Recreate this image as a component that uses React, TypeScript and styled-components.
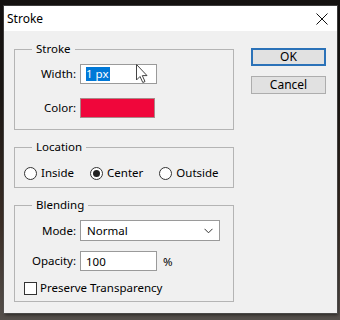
import React from 'react';
import styled, { createGlobalStyle } from 'styled-components';

const Global = createGlobalStyle`
  html, body { margin: 0; padding: 0; }
  body {
    width: 340px;
    height: 320px;
    overflow: hidden;
    background: linear-gradient(to bottom, #141110 0%, #1c1714 30%, #3b2e26 70%, #55504c 100%);
    font-family: "Noto Sans", "Liberation Sans", sans-serif;
    color: #000;
  }
`;

const Dialog = styled.div`
  margin: 6px 0 0 4px;
  width: 333px;
  height: 307px;
  background: #f0f0f0;
  display: flex;
  flex-direction: column;
  box-shadow: 0 0 0 1px rgba(90, 90, 90, 0.6), 1px 2px 3px rgba(0, 0, 0, 0.5);
`;

const TitleBar = styled.div`
  height: 25px;
  background: #fff;
  display: flex;
  align-items: center;
  justify-content: space-between;
  padding: 0 9px 0 3px;
  font-size: 12px;
`;

const Body = styled.div`
  flex: 1;
  display: flex;
  gap: 17px;
  padding: 10px 11px 0 10px;
`;

const Groups = styled.div`
  width: 220px;
  display: flex;
  flex-direction: column;
  gap: 9px;
`;

const Group = styled.fieldset<{ $pt: number; $pb: number }>`
  margin: 0;
  min-width: 0;
  border: 1px solid #b4b4b4;
  padding: ${(p) => p.$pt}px 0 ${(p) => p.$pb}px 0;
`;

const Legend = styled.legend`
  margin-left: 17px;
  padding: 0 4px;
  font-size: 11.5px;
  line-height: 16px;
`;

const FormGrid = styled.div<{ $gap: number }>`
  display: grid;
  grid-template-columns: 61px auto;
  column-gap: 4px;
  row-gap: ${(p) => p.$gap}px;
  align-items: center;
`;

const Label = styled.div`
  text-align: right;
  font-size: 11.5px;
  line-height: 16px;
`;

const TextBox = styled.div<{ $w: number }>`
  position: relative;
  box-sizing: border-box;
  width: ${(p) => p.$w}px;
  height: 20px;
  border: 1px solid #9a9a9a;
  background: #fff;
  display: flex;
  align-items: center;
  padding-left: 5px;
  font-size: 11.5px;
`;

const Selected = styled.span`
  background: #0078d7;
  color: #fff;
  line-height: 14px;
  padding: 0 1px 0 0;
`;

const Cursor = styled.svg`
  position: absolute;
  left: 54px;
  top: -2px;
`;

const Swatch = styled.div`
  box-sizing: border-box;
  width: 75px;
  height: 20px;
  border: 1px solid #a88;
  background: #f0063b;
`;

const RadioRow = styled.div`
  display: flex;
  align-items: center;
  gap: 16px;
  padding-left: 9px;
`;

const Option = styled.label`
  display: flex;
  align-items: center;
  gap: 4px;
  font-size: 11.5px;
  line-height: 16px;
`;

const Radio = styled.span<{ $on?: boolean }>`
  box-sizing: border-box;
  width: 13px;
  height: 13px;
  border-radius: 50%;
  border: 1px solid #333;
  background: #fff;
  display: flex;
  align-items: center;
  justify-content: center;
  &::after {
    content: '';
    width: 7px;
    height: 7px;
    border-radius: 50%;
    background: ${(p) => (p.$on ? '#222' : 'transparent')};
  }
`;

const Select = styled.div`
  box-sizing: border-box;
  width: 140px;
  height: 21px;
  border: 1px solid #9a9a9a;
  background: #fff;
  display: flex;
  align-items: center;
  justify-content: space-between;
  padding: 0 6px 0 6px;
  font-size: 11.5px;
`;

const FieldWithUnit = styled.div`
  display: flex;
  align-items: center;
  gap: 6px;
  font-size: 11.5px;
`;

const CheckRow = styled.label`
  grid-column: 1 / span 2;
  display: flex;
  align-items: center;
  gap: 3px;
  padding-left: 9px;
  font-size: 11.5px;
  line-height: 16px;
  margin-top: -1px;
`;

const CheckBox = styled.span`
  box-sizing: border-box;
  width: 13px;
  height: 13px;
  border: 1px solid #333;
  background: #fff;
`;

const Buttons = styled.div`
  display: flex;
  flex-direction: column;
  gap: 10px;
  padding-top: 7px;
`;

const Button = styled.button<{ $default?: boolean }>`
  box-sizing: border-box;
  width: 75px;
  height: 18px;
  margin: 0;
  padding: 0;
  background: #e1e1e1;
  border: ${(p) => (p.$default ? '2px solid #2b72b8' : '1px solid #adadad')};
  font-family: inherit;
  font-size: 12px;
  line-height: 14px;
  color: #000;
`;

export default function App() {
  return (
    <>
      <Global />
      <Dialog>
        <TitleBar>
          <span>Stroke</span>
          <svg width="12" height="12" viewBox="0 0 12 12">
            <path d="M0.5 0.5 L11.5 11.5 M11.5 0.5 L0.5 11.5" stroke="#111" strokeWidth="1" />
          </svg>
        </TitleBar>
        <Body>
          <Groups>
            <Group $pt={7} $pb={11}>
              <Legend>Stroke</Legend>
              <FormGrid $gap={14}>
                <Label>Width:</Label>
                <TextBox $w={77}>
                  <Selected>1 px</Selected>
                  <Cursor width="13" height="21" viewBox="0 0 13 21">
                    <path
                      d="M1.5 1.5 L1.5 17 L5 13.5 L7.8 19.5 L10 18.5 L7.3 12.6 L12 12.6 Z"
                      fill="#fff"
                      stroke="#444"
                      strokeWidth="1"
                      strokeLinejoin="round"
                    />
                  </Cursor>
                </TextBox>
                <Label>Color:</Label>
                <Swatch />
              </FormGrid>
            </Group>
            <Group $pt={10} $pb={6}>
              <Legend>Location</Legend>
              <RadioRow>
                <Option>
                  <Radio />
                  Inside
                </Option>
                <Option>
                  <Radio $on />
                  Center
                </Option>
                <Option>
                  <Radio />
                  Outside
                </Option>
              </RadioRow>
            </Group>
            <Group $pt={7} $pb={5}>
              <Legend>Blending</Legend>
              <FormGrid $gap={10}>
                <Label>Mode:</Label>
                <Select>
                  <span>Normal</span>
                  <svg width="9" height="6" viewBox="0 0 9 6">
                    <path d="M0.5 0.8 L4.5 4.8 L8.5 0.8" fill="none" stroke="#333" strokeWidth="1" />
                  </svg>
                </Select>
                <Label>Opacity:</Label>
                <FieldWithUnit>
                  <TextBox $w={77}>100</TextBox>
                  <span>%</span>
                </FieldWithUnit>
                <CheckRow>
                  <CheckBox />
                  Preserve Transparency
                </CheckRow>
              </FormGrid>
            </Group>
          </Groups>
          <Buttons>
            <Button $default>OK</Button>
            <Button>Cancel</Button>
          </Buttons>
        </Body>
      </Dialog>
    </>
  );
}
